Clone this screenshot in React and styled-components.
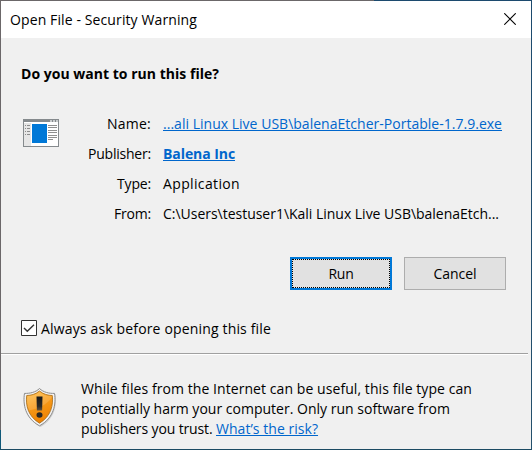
import React from 'react';
import styled, { createGlobalStyle } from 'styled-components';

const GlobalStyle = createGlobalStyle`
  * { box-sizing: border-box; }
  body {
    margin: 0;
    background: #f0f0f0;
    color: #000;
    font: 14px/20px "Open Sans", "Noto Sans", sans-serif;
    overflow: hidden;
  }
`;

const Desktop = styled.div`
  width: 532px;
  height: 450px;
  padding: 1px;
  background:
    linear-gradient(#1c4a6e, #1c4a6e) right top / 158px 1px no-repeat,
    linear-gradient(#1c4a6e, #24506c) right top / 1px 450px no-repeat,
    linear-gradient(#1b4a63, #1b4a63) left bottom / 532px 1px no-repeat,
    linear-gradient(#0f5878, #0f5878) left bottom / 1px 20px no-repeat,
    #6b6769;
`;

const Dialog = styled.main`
  display: flex;
  flex-direction: column;
  height: 448px;
  background: #f0f0f0;
`;

const Text = styled.span`
  white-space: pre;
  letter-spacing: ${(p) => p.$track || 0}px;
  font-weight: ${(p) => (p.$bold ? 700 : 400)};
`;

const Link = styled(Text).attrs({ as: 'a' })`
  color: #0066cc;
  text-decoration: underline;
  text-decoration-thickness: 1px;
  text-underline-offset: 1px;
  text-decoration-skip-ink: none;
  cursor: pointer;
`;

const TitleBar = styled.header`
  display: flex;
  justify-content: space-between;
  height: 37px;
  padding: 9px 15px 0 9px;
  background: #fff;
`;

const CloseIcon = styled.svg`
  width: 12px;
  height: 12px;
  margin-top: 3px;
`;

const Heading = styled.h1`
  margin: 26px 0 0 20px;
  font-size: 14px;
  line-height: 20px;
`;

const Details = styled.section`
  display: flex;
  margin-top: 30px;
  padding-left: 22px;
`;

const AppIcon = styled.svg`
  width: 36px;
  height: 28px;
  margin-top: 5px;
`;

const Fields = styled.dl`
  display: grid;
  grid-template-columns: 92px auto;
  grid-auto-rows: 30px;
  column-gap: 12px;
  margin: 0;
`;

const Label = styled.dt`
  text-align: right;
`;

const Value = styled.dd`
  margin: 0;
`;

const Buttons = styled.div`
  display: flex;
  justify-content: flex-end;
  gap: 12px;
  margin-top: 23px;
  padding-right: 25px;
`;

const Button = styled.button`
  width: 102px;
  height: 33px;
  padding: 1px 0 0;
  border: ${(p) => (p.$focused ? '2px solid #0078d7' : '1px solid #adadad')};
  outline: ${(p) => (p.$focused ? '1px dotted #000' : 'none')};
  outline-offset: -3px;
  background: #e1e1e1;
  color: #000;
  font: inherit;
`;

const Option = styled.label`
  display: flex;
  gap: 4px;
  margin: 29px 0 0 20px;
`;

const CheckBox = styled.svg`
  width: 16px;
  height: 16px;
  margin-top: 1px;
`;

const Divider = styled.hr`
  width: 527px;
  height: 2px;
  margin: 14px 0 0;
  border: 0;
  border-top: 1px solid #a0a0a0;
  border-bottom: 1px solid #fff;
`;

const Warning = styled.footer`
  display: flex;
  margin-top: 24px;
  padding-left: 21px;
`;

const Shield = styled.svg`
  width: 36px;
  height: 42px;
  margin-top: 8px;
`;

const Message = styled.p`
  display: flex;
  flex-direction: column;
  margin: 0 0 0 23px;
`;

const NAV_ROWS = [6, 9, 12, 15];
const TEXT_ROWS = [6, 8, 11, 13, 16, 18];

export default function App() {
  return (
    <Desktop>
      <GlobalStyle />
      <Dialog>
        <TitleBar>
          <Text $track={0.109}>Open File - Security Warning</Text>
          <CloseIcon viewBox="0 0 12 12">
            <path d="M.3.3l11.4 11.4M11.7.3L.3 11.7" stroke="#000" strokeWidth="1.1" />
          </CloseIcon>
        </TitleBar>

        <Heading><Text $bold $track={0.023}>Do you want to run this file?</Text></Heading>

        <Details>
          <AppIcon viewBox="0 0 36 28" shapeRendering="crispEdges">
            <path d="M0 0h36v28H0z" fill="#858a8d" />
            <path d="M1 3h34v24H1z" fill="#fff" />
            <path d="M1 4h7v23H1z" fill="#e6e6e6" />
            <path d="M27 1h2v2h-2zM30 1h2v2h-2zM33 1h2v2h-2z" fill="#c9cccd" />
            <path d="M9 5h15v19H9z" fill="#0078d7" />
            {NAV_ROWS.map((y) => (
              <path key={y} d={`M2 ${y}h1v1H2zM4 ${y}h3v1H4z`} fill="#8c8c8c" />
            ))}
            {TEXT_ROWS.map((y) => (
              <path key={y} d={`M25 ${y}h9v1h-9z`} fill="#8f8f8f" />
            ))}
            <path d="M25 20h5v1h-5z" fill="#8f8f8f" />
          </AppIcon>
          <Fields>
            <Label><Text $track={0.236}>Name:</Text></Label>
            <Value><Link $track={0.018}>...ali Linux Live USB\balenaEtcher-Portable-1.7.9.exe</Link></Value>
            <Label><Text $track={-0.216}>Publisher:</Text></Label>
            <Value><Link $bold $track={-0.073}>Balena Inc</Link></Value>
            <Label><Text $track={-0.166}>Type:</Text></Label>
            <Value><Text $track={0.357}>Application</Text></Value>
            <Label><Text $track={-0.202}>From:</Text></Label>
            <Value><Text $track={-0.02}>C:\Users\testuser1\Kali Linux Live USB\balenaEtch...</Text></Value>
          </Fields>
        </Details>

        <Buttons>
          <Button $focused><Text $track={-0.2}>Run</Text></Button>
          <Button><Text $track={-0.048}>Cancel</Text></Button>
        </Buttons>

        <Option>
          <CheckBox viewBox="0 0 16 16">
            <path d="M.5.5h15v15H.5z" fill="#fff" stroke="#333" />
            <path d="M3 8l3.3 3.3L13 4.7" fill="none" stroke="#333" strokeWidth="1.4" />
          </CheckBox>
          <Text $track={0.16}>Always ask before opening this file</Text>
        </Option>

        <Divider />

        <Warning>
          <Shield viewBox="0 0 36 42">
            <defs>
              <linearGradient id="gold" x1="0" y1="0" x2="0.35" y2="1">
                <stop offset="0" stopColor="#ffc04a" />
                <stop offset="0.5" stopColor="#f79a18" />
                <stop offset="1" stopColor="#ee8304" />
              </linearGradient>
              <linearGradient id="mark" x1="0" y1="0" x2="0" y2="1">
                <stop offset="0" stopColor="#171717" />
                <stop offset="0.7" stopColor="#2b2a28" />
                <stop offset="1" stopColor="#66543c" />
              </linearGradient>
            </defs>
            <path d="M18.5 2.5C14 6.3 9 7.3 3.5 7.2C2 18 4 32 18.5 40C33 32 35 18 33.5 7.2C28 7.3 23 6.3 18.5 2.5z" fill="#000" opacity=".13" />
            <path d="M17.5 1.5C13.5 5.4 8 6.5 2.5 6.4C.8 17 3 31 17.5 38.8C32 31 34.2 17 32.5 6.4C27 6.5 21.5 5.4 17.5 1.5z" fill="#f3f3f3" stroke="#8b8b8b" />
            <path d="M17.5 4C13.5 7.3 9 8.4 4.7 8.5C3.6 18 5.7 29.2 17.5 36.2C29.3 29.2 31.4 18 30.3 8.5C26 8.4 21.5 7.3 17.5 4z" fill="url(#gold)" stroke="#a76b16" strokeWidth=".8" />
            <path d="M17.5 5C14 8 9.3 9 5.4 9.2C4.8 14 5.3 19 7.1 23.3C14 22.5 25 18 29.7 10.5V9.2C25.7 9 21 8 17.5 5z" fill="#fff" opacity=".16" />
            <path d="M14.5 9.5h6l-.4 14h-5.2z" fill="url(#mark)" />
            <ellipse cx="17.5" cy="28" rx="3" ry="2.7" fill="#2b2824" />
          </Shield>
          <Message>
            <Text $track={0.071}>While files from the Internet can be useful, this file type can</Text>
            <Text $track={0.013}>potentially harm your computer. Only run software from</Text>
            <Text $track={-0.13}>publishers you trust. <Link $track={0.04}>What’s the risk?</Link></Text>
          </Message>
        </Warning>
      </Dialog>
    </Desktop>
  );
}
